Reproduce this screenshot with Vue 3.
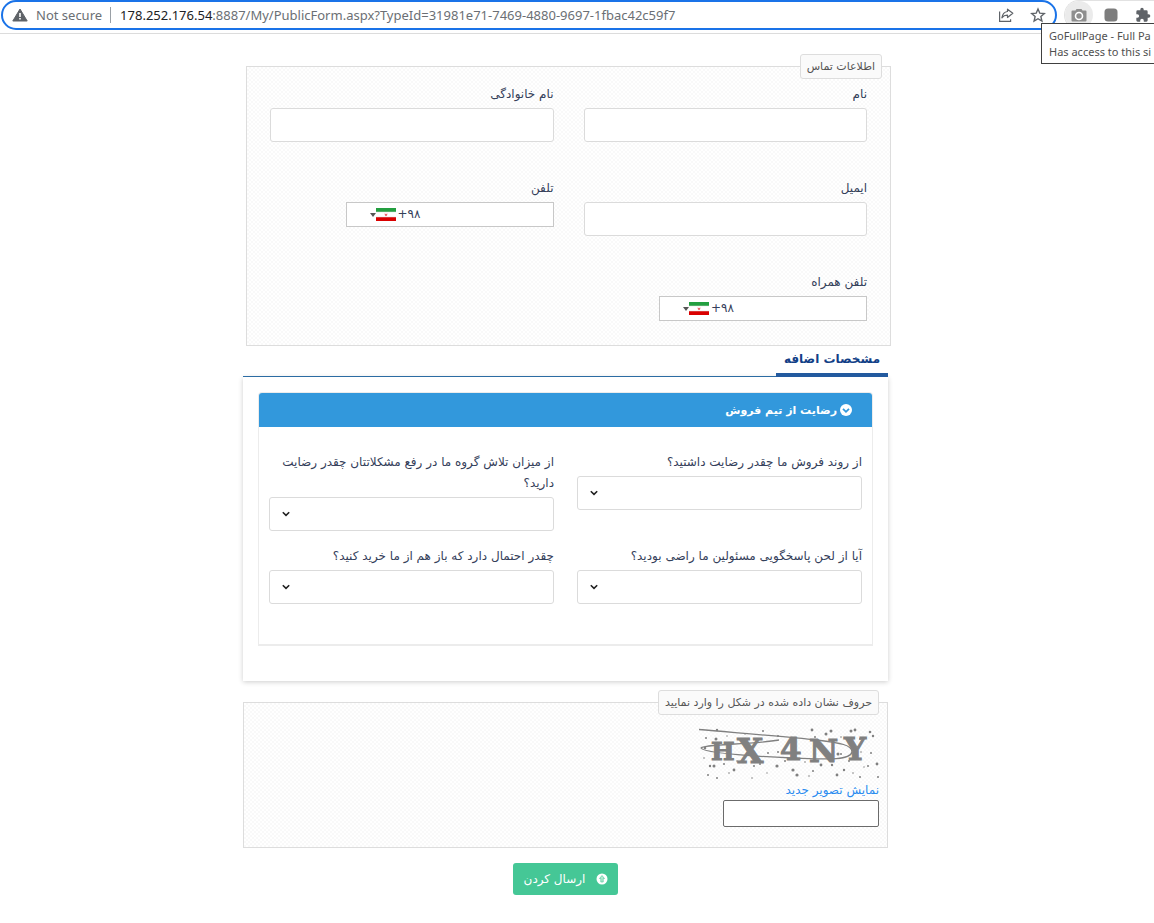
<script setup>
import { ref } from 'vue'

const address = ref({ host: '178.252.176.54', rest: ':8887/My/PublicForm.aspx?TypeId=31981e71-7469-4880-9697-1fbac42c59f7' })
const contactFields = [
  { id: 'first-name', label: 'نام', type: 'text' },
  { id: 'last-name', label: 'نام خانوادگی', type: 'text' },
  { id: 'email', label: 'ایمیل', type: 'email' },
  { id: 'phone', label: 'تلفن', type: 'tel' },
  { id: 'mobile', label: 'تلفن همراه', type: 'tel' },
]
const questions = [
  { id: 'q-process', label: 'از روند فروش ما چقدر رضایت داشتید؟' },
  { id: 'q-effort', label: 'از میزان تلاش گروه ما در رفع مشکلاتتان چقدر رضایت دارید؟' },
  { id: 'q-tone', label: 'آیا از لحن پاسخگویی مسئولین ما راضی بودید؟' },
  { id: 'q-again', label: 'چقدر احتمال دارد که باز هم از ما خرید کنید؟' },
]
const letters = [
  { c: 'H', x: 12, y: 32, s: 25 },
  { c: 'X', x: 38, y: 35, s: 34 },
  { c: '4', x: 81, y: 32, s: 31 },
  { c: 'N', x: 110, y: 34, s: 32 },
  { c: 'Y', x: 145, y: 32, s: 31 },
]
const specks = [
  [18, 2, 1.2], [64, 3, 1], [113, 2, 1.4], [127, 6, 1.5], [132, 3, 1.5], [152, 3, 1.5], [156, 2, 1.4], [171, 4, 1.3],
  [174, 8, 1.2], [161, 11, 1], [79, 8, 1], [7, 10, 1], [17, 11, 1.5], [28, 8, .7], [46, 6, .7], [6, 20, 1.3],
  [96, 19, 1.2], [69, 25, 1], [79, 24, 1], [139, 26, 1.5], [142, 26, 1], [172, 25, 1], [162, 24, .8], [178, 36, 1.4],
  [5, 30, .8], [11, 38, 1.2], [15, 38, 1.5], [35, 42, 1.4], [55, 38, 1], [61, 36, 1], [78, 38, 1.6], [94, 42, 1.6],
  [98, 47, 1.6], [114, 43, 1], [122, 37, 1.4], [133, 37, 1.2], [145, 42, 1.2], [169, 38, 1], [165, 39, .7],
  [9, 47, 1], [18, 50, 1], [30, 45, .8], [53, 50, .8], [68, 45, .7], [110, 48, .8], [138, 47, 1.4], [154, 45, .8],
  [161, 49, 1], [179, 49, 1], [86, 33, 1], [106, 34, .8], [150, 33, 1], [25, 36, 1], [38, 33, .8], [116, 9, 1], [142, 9, .8],
]
</script>

<template>
  <div class="page">
    <header class="browser">
      <div class="omnibox">
        <svg class="warn" viewBox="0 0 16 14" aria-hidden="true"><path d="M8 1 15.2 13H.8Z" fill="#5f6368" stroke="#5f6368" stroke-linejoin="round" /><path d="M7.2 5h1.6v4H7.2zM7.2 10h1.6v1.6H7.2z" fill="#fff" /></svg>
        <span class="insecure">Not secure</span>
        <span class="url"><b>{{ address.host }}</b>{{ address.rest }}</span>
        <button type="button" class="tool" aria-label="Share">
          <svg viewBox="0 0 16 16" fill="none" stroke="#5f6368" stroke-width="1.2"><path d="M1.600 4.500v9.900h11v-2.200" /><path d="M9.500 2.200 14.800 6.300 9.500 10.500V8.200C7 8.100 5.200 9 3.900 10.800 4.400 7.500 6.300 5 9.500 4.500Z" stroke-linejoin="round" /></svg>
        </button>
        <button type="button" class="tool" aria-label="Bookmark">
          <svg viewBox="0 0 16 16" fill="none" stroke="#5f6368" stroke-width="1.4"><path d="m8 2 1.800 4.200 4.500.4-3.400 3 1 4.500L8 11.700l-3.900 2.400 1-4.500-3.400-3 4.500-.4Z" /></svg>
        </button>
      </div>
      <div class="extensions">
        <button type="button" class="ext active" aria-label="GoFullPage">
          <svg viewBox="0 0 16 14"><path d="M1.500 2.500H4.500L5.500 1h5l1 1.500h3a1 1 0 0 1 1 1V12.500a1 1 0 0 1-1 1h-13a1 1 0 0 1-1-1v-9a1 1 0 0 1 1-1Z" fill="#8e8e8e" /><circle cx="8" cy="8" r="3.500" fill="#8e8e8e" stroke="#fff" stroke-width="1.600" /></svg>
        </button>
        <button type="button" class="ext" aria-label="Extension"><svg viewBox="0 0 16 14"><rect x="1.500" y="0.500" width="13" height="13" rx="3.500" fill="#7d7d7d" /></svg></button>
        <button type="button" class="ext" aria-label="Extensions">
          <svg viewBox="0 0 24 24"><path fill="#5f6368" d="M20.500 11H19V7a2 2 0 0 0-2-2h-4V3.500a2.500 2.500 0 0 0-5 0V5H4a2 2 0 0 0-2 2v3.800h1.500a2.700 2.700 0 0 1 0 5.400H2V20a2 2 0 0 0 2 2h3.800v-1.500a2.700 2.700 0 0 1 5.400 0V22H17a2 2 0 0 0 2-2v-4h1.500a2.500 2.500 0 0 0 0-5Z" /></svg>
        </button>
      </div>
      <div class="tooltip" role="tooltip">GoFullPage - Full Pa<br>Has access to this si</div>
    </header>

    <main class="content" dir="rtl">
      <form class="form" @submit.prevent>
        <fieldset class="group contact">
          <legend>اطلاعات تماس</legend>
          <div class="contact-grid">
            <div v-for="f in contactFields" :key="f.id" class="field">
              <label :for="f.id">{{ f.label }}</label>
              <div v-if="f.type === 'tel'" class="tel" dir="ltr">
                <button type="button" class="dial" aria-label="+98">
                  <svg class="caret" viewBox="0 0 6 4"><path d="M0 0h6L3 4Z" fill="#555" /></svg>
                  <svg class="flag" viewBox="0 0 20 13"><path d="M0 0h20v13H0z" fill="#fff" /><path d="M0 0h20V4H0z" fill="#239f40" /><path d="M0 9h20v4H0z" fill="#da0000" /><path d="M0 4h20M0 9h20" stroke="#ddd" stroke-width=".5" /><path d="M8.500 5.500 10 6l1.500-.5-.5 2-1 .7-1-.7Z" fill="#e8666b" /></svg>
                  <span>+۹۸</span>
                </button>
                <input :id="f.id" type="tel">
              </div>
              <input v-else :id="f.id" :type="f.type" class="control">
            </div>
          </div>
        </fieldset>

        <div class="tabs"><button type="button" class="tab">مشخصات اضافه</button></div>
        <section class="panel">
          <div class="card">
            <h2>
              <svg viewBox="0 0 12 12" aria-hidden="true"><circle cx="6" cy="6" r="6" fill="#fff" /><path d="m3 4.800 3 3 3-3" fill="none" stroke="#3298dc" stroke-width="1.800" /></svg>
              <span>رضایت از تیم فروش</span>
            </h2>
            <div class="questions">
              <div v-for="q in questions" :key="q.id" class="field">
                <label :for="q.id">{{ q.label }}</label>
                <div class="select">
                  <select :id="q.id" class="control"><option></option></select>
                  <svg viewBox="0 0 8 6" aria-hidden="true"><path d="m.8 1.200 3.200 3.200 3.200-3.200" fill="none" stroke="#222" stroke-width="1.600" /></svg>
                </div>
              </div>
            </div>
          </div>
        </section>

        <fieldset class="group captcha">
          <legend>حروف نشان داده شده در شکل را وارد نمایید</legend>
          <div class="captcha-body">
            <svg class="captcha-image" viewBox="0 0 180 52" direction="ltr" role="img" aria-label="HX4NY">
              <g fill="#808080">
                <text v-for="l in letters" :key="l.c" :x="l.x" :y="l.y" :font-size="l.s" stroke="#808080">{{ l.c }}</text>
                <circle v-for="(s, i) in specks" :key="i" :cx="s[0]" :cy="s[1]" :r="s[2]" />
              </g>
              <path d="M0 1.500C40 5 90 9 118 12c24 3 35 5 35 12-2 9-28 7-60 6C50 28 5 25 2 20c2-4 48-3 78-8" fill="none" stroke="#808080" stroke-width="1.300" />
            </svg>
            <a href="#">نمایش تصویر جدید</a>
            <input type="text" aria-label="حروف نشان داده شده در شکل را وارد نمایید">
          </div>
        </fieldset>

        <button type="submit" class="submit">
          <svg viewBox="0 0 12 12" aria-hidden="true"><circle cx="6" cy="6" r="5.500" fill="#fff" /><path d="M6 2.500 8.500 5.500H7.200v3.500H4.800V5.500H3.500Z" fill="#b5e8d2" stroke="#45c796" stroke-width=".6" /></svg>
          <span>ارسال کردن</span>
        </button>
      </form>
    </main>
  </div>
</template>

<style>
body { margin: 0; background: #fff; overflow-x: hidden; }
</style>

<style scoped>
* { box-sizing: border-box; }
button, input, select { font: inherit; }
.page { overflow: hidden; font: 12px/21px "DejaVu Sans", sans-serif; color: #34405a; }
.browser { position: relative; display: flex; gap: 7px; height: 34px; padding: 0 0 3px 1px; border-bottom: 1px solid #dcdcdc; font-family: "Noto Sans", "Open Sans", sans-serif; }
.omnibox { flex: 1; min-width: 0; display: flex; align-items: center; border: 2px solid #1a73e8; border-radius: 15px; height: 30px; padding: 0 9px; color: #6b6f74; font-size: 13px; white-space: nowrap; }
.warn { width: 16px; height: 14px; flex: none; margin-right: 8px; }
.insecure { padding-right: 8px; border-right: 1px solid #9aa0a6; line-height: 16px; margin-right: 9px; }
.url { flex: 1; overflow: hidden; }
.url b { font-weight: 400; color: #202124; }
.tool { border: 0; background: none; padding: 0; width: 16px; height: 16px; margin-left: 16px; }
.tool svg, .ext svg { display: block; width: 16px; height: 16px; }
.extensions { flex: 0 0 90px; min-width: 0; display: flex; align-items: center; gap: 4px; border: 1px solid #e2e2e2; border-right: 0; border-radius: 15px 0 0 15px; height: 30px; }
.ext { border: 0; border-radius: 14px; background: none; width: 28px; height: 28px; padding: 6px; flex: none; }
.active { background: #ebebeb; }
.tooltip { position: absolute; left: calc(100% - 113px); top: 23px; width: 120px; height: 41px; padding: 4px 7px; border: 1px solid #404040; background: #fff; color: #505050; font-size: 11px; line-height: 16px; white-space: nowrap; z-index: 1; }
.content { padding: 20px 23px 28px 0; }
.form { max-width: 645px; margin: 0 auto; }
.group { min-width: 0; margin: 0; border: 1px solid #ddd; padding: 0; background: conic-gradient(#f9f9f9 25%, #fff 0 50%, #f9f9f9 0 75%, #fff 0) 0 0 / 4px 4px; }
legend { height: 25px; padding: 0 6px; border: 1px solid #ddd; border-radius: 3px; background: #fafafa; color: #555; font-size: 11px; line-height: 23px; margin-inline-start: 8px; }
.contact { margin: 0 -3px 0 3px; }
.contact-grid { display: grid; grid-template-columns: 1fr 1fr; gap: 36px 30px; padding: 5px 23px 24px; }
.field { min-width: 0; }
.field label { display: block; margin-bottom: 3px; }
.control { display: block; width: 100%; height: 34px; border: 1px solid #dbdbdb; border-radius: 3px; background: #fff; padding: 0 12px; color: #34405a; }
.tel { display: flex; width: 208px; max-width: 100%; height: 25px; border: 1px solid #c8c8c8; background: #fff; margin-inline-start: auto; }
.dial { display: flex; align-items: center; border: 0; background: none; padding: 0 0 0 23px; color: #34405a; line-height: 21px; }
.caret { width: 6px; height: 4px; }
.flag { width: 20px; height: 13px; margin-right: 2px; }
.tel input { flex: 1; min-width: 0; border: 0; background: none; padding: 0 6px; }
.tabs { display: flex; border-bottom: 1px solid #2f73ad; height: 31px; }
.tab { border: 0; border-bottom: 4px solid #235a9f; background: none; height: 31px; width: 112px; padding: 0; color: #123f87; font-weight: 700; font-size: 12px; white-space: nowrap; }
.panel { padding: 15px 15px 35px; box-shadow: 0 1px 5px #0003; }
.card { border: 1px solid #ececec; border-bottom-width: 2px; border-radius: 4px 4px 0 0; padding-bottom: 40px; }
h2 { display: flex; align-items: center; gap: 3px; margin: 0; height: 34px; padding: 0 20px; background: #3298dc; border-radius: 3px 3px 0 0; color: #fff; font-size: 11px; font-weight: 700; }
h2 svg { width: 12px; height: 12px; }
.questions { display: grid; grid-template-columns: 1fr 1fr; gap: 15px 23px; padding: 25px 10px 0; }
.select { display: grid; align-items: center; }
.select select { appearance: none; grid-area: 1 / 1; }
.select svg { grid-area: 1 / 1; justify-self: end; width: 8px; height: 6px; margin-inline-end: 13px; pointer-events: none; }
.captcha { margin-top: 9px; }
.captcha-body { display: flex; flex-direction: column; align-items: flex-start; padding: 13px 8px 20px; }
.captcha-image { width: 180px; height: 52px; font-family: "DejaVu Serif", serif; font-weight: 700; }
.captcha-body a { color: #2a8cf0; text-decoration: none; line-height: 20px; }
.captcha-body input { width: 156px; height: 27px; border: 1px solid #6b6b6b; border-radius: 2px; background: #fff; }
.submit { display: flex; align-items: center; gap: 11px; width: max-content; height: 32px; margin: 15px auto 0; border: 0; border-radius: 3px; padding: 0 10px 0 11px; background: #45c796; color: #fff; }
.submit svg { width: 12px; height: 12px; }
</style>
